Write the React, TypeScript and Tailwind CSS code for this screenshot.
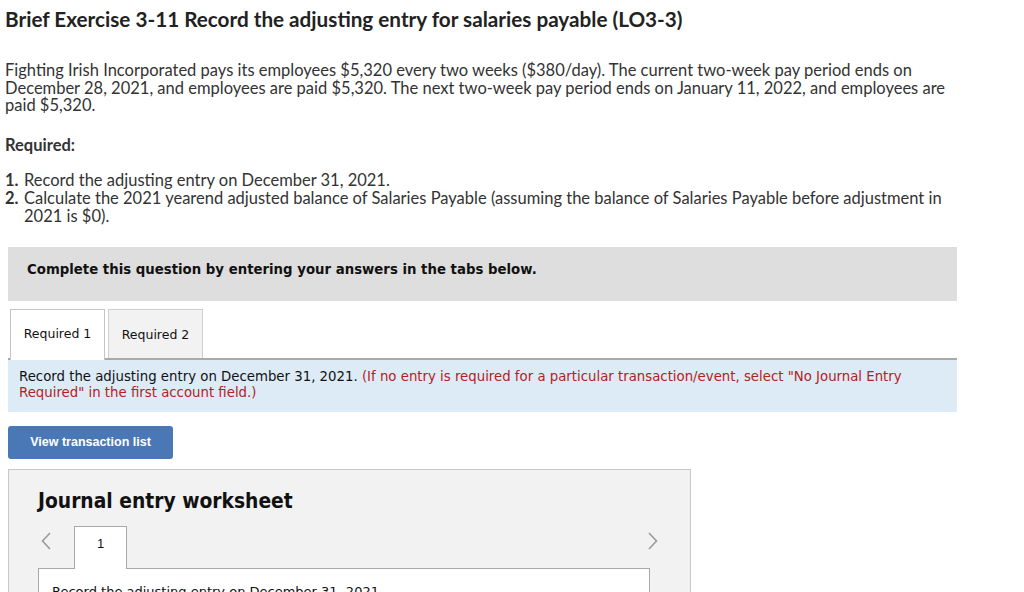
import React from "react";

export default function App() {
  return (
    <div className="w-[1024px] h-[592px] overflow-hidden bg-white text-[#222]">
      <div className="pl-[5px] pt-[7px]">
        <h1 className="font-['Lato','Liberation_Sans',sans-serif] text-[20.7px] font-bold leading-[24px] text-[#222]">
          Brief Exercise 3-11 Record the adjusting entry for salaries payable (LO3-3)
        </h1>
        <p className="mt-[31px] w-[950px] font-['Lato','Liberation_Sans',sans-serif] text-[16.5px] leading-[17.5px] text-[#333]">
          Fighting Irish Incorporated pays its employees $5,320 every two weeks ($380/day). The current two-week pay period ends on December 28, 2021, and employees are paid $5,320. The next two-week pay period ends on January 11, 2022, and employees are paid $5,320.
        </p>
        <p className="mt-[21px] font-['Lato','Liberation_Sans',sans-serif] text-[16.5px] font-bold leading-[18px] text-[#333]">
          Required:
        </p>
        <ol className="mt-[17px] w-[950px] font-['Lato','Liberation_Sans',sans-serif] text-[16.5px] leading-[18px] text-[#333]">
          <li className="flex">
            <span className="w-[19px] shrink-0 font-bold">1.</span>
            <span>Record the adjusting entry on December 31, 2021.</span>
          </li>
          <li className="flex">
            <span className="w-[19px] shrink-0 font-bold">2.</span>
            <span>Calculate the 2021 yearend adjusted balance of Salaries Payable (assuming the balance of Salaries Payable before adjustment in 2021 is $0).</span>
          </li>
        </ol>
      </div>

      <div className="ml-[8px] w-[949px] font-['DejaVu_Sans','Verdana',sans-serif]">
        <div className="mt-[22px] h-[54px] bg-[#dedede] pl-[19px] pt-[14px] leading-[16px]">
          <span className="text-[13.3px] leading-[16px] font-bold text-[#111]">Complete this question by entering your answers in the tabs below.</span>
        </div>

        <div className="mt-[8px] flex items-end gap-[3px] pl-[2px] border-b-2 border-[#a9a9a9]">
          <div className="h-[51px] w-[95px] -mb-[2px] bg-white border border-b-0 border-[#c4c4c4] flex items-center justify-center text-[12.5px] text-[#111]">
            Required 1
          </div>
          <div className="h-[49px] w-[95px] pt-[3px] bg-[#f2f2f2] border border-b-0 border-[#d0d0d0] flex items-center justify-center text-[12.5px] text-[#111]">
            Required 2
          </div>
        </div>

        <div className="h-[52px] bg-[#ddebf7] pl-[11px] pr-[20px] pt-[9px] text-[13.3px] leading-[16px] text-[#111]">
          Record the adjusting entry on December 31, 2021.{" "}
          <span className="text-[#b22222]">
            (If no entry is required for a particular transaction/event, select "No Journal Entry Required" in the first account field.)
          </span>
        </div>
      </div>

      <button className="ml-[8px] mt-[14px] h-[33px] w-[165px] rounded-[3px] bg-[#4a78b6] text-white font-['Liberation_Sans','Arial',sans-serif] text-[12.5px] font-bold text-center">
        View transaction list
      </button>

      <div className="ml-[8px] mt-[10px] w-[683px] h-[200px] bg-[#f2f2f2] border border-[#c8c8c8] px-[29px] pt-[18px]">
        <h2 className="font-['DejaVu_Sans_Condensed','DejaVu_Sans',sans-serif] text-[20.8px] font-bold leading-[26px] text-[#111]">
          Journal entry worksheet
        </h2>
        <div className="mt-[12px] flex items-end">
          <div className="w-[36px] h-[42px] pt-[6px] pl-[3px]">
            <svg width="10" height="18" viewBox="0 0 10 18" fill="none" stroke="#9a9a9a" strokeWidth="1.6">
              <path d="M9 1 L1.5 9 L9 17" />
            </svg>
          </div>
          <div className="w-[53px] h-[43px] -mb-px pt-[9px] bg-white border border-b-0 border-[#a9a9a9] text-center font-['Liberation_Sans',sans-serif] text-[13px] leading-[16px] text-[#111] relative z-10">
            1
          </div>
          <div className="flex-1 h-[42px] pt-[6px] pr-[3px] flex justify-end items-start">
            <svg width="10" height="18" viewBox="0 0 10 18" fill="none" stroke="#9a9a9a" strokeWidth="1.6">
              <path d="M1 1 L8.5 9 L1 17" />
            </svg>
          </div>
        </div>
        <div className="w-[612px] h-[80px] bg-white border border-[#a9a9a9] pl-[13px] pt-[13px] font-['DejaVu_Sans','Verdana',sans-serif] text-[13px] text-[#111]">
          Record the adjusting entry on December 31, 2021.
        </div>
      </div>
    </div>
  );
}
